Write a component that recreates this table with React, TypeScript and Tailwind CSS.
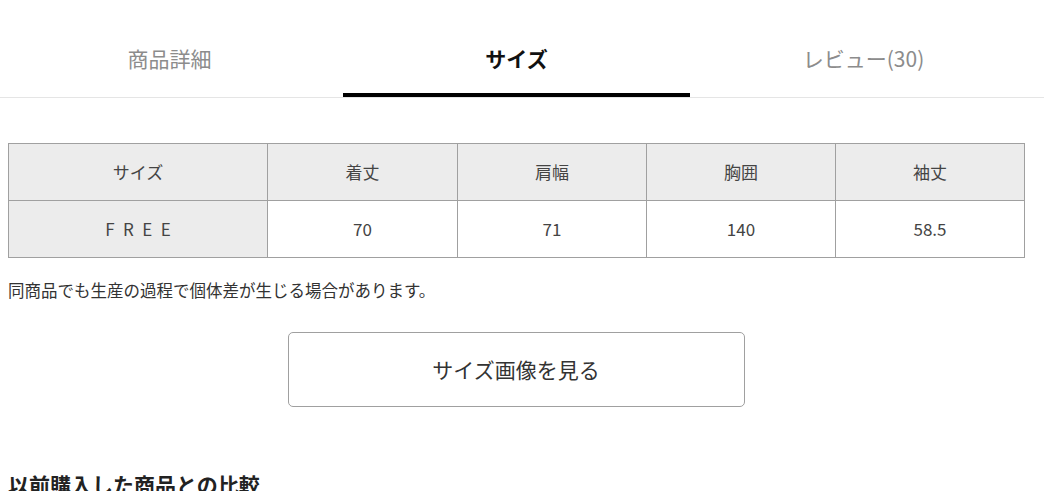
import React from "react";

const font = { fontFamily: '"Noto Sans CJK JP", "Noto Sans", sans-serif' };

export default function App() {
  const headers = ["サイズ", "着丈", "肩幅", "胸囲", "袖丈"];
  const values = ["70", "71", "140", "58.5"];
  return (
    <div className="w-[1044px] h-[491px] overflow-hidden bg-white text-[#333]" style={font}>
      <div className="border-b border-[#e5e5e5] pt-[20px]">
        <div className="ml-[-4px] w-[1041px] grid grid-cols-3 text-[21px]">
          <div className="h-[77px] flex items-start justify-center pt-[23px] text-[#8c8c8c]">商品詳細</div>
          <div className="h-[77px] flex items-start justify-center pt-[23px] font-bold text-[#111] border-b-[4px] border-black">サイズ</div>
          <div className="h-[77px] flex items-start justify-center pt-[23px] text-[#8c8c8c]">レビュー(30)</div>
        </div>
      </div>
      <div className="px-[8px] pt-[45px]">
        <table className="w-[1017px] border-collapse text-[17px] text-[#444]">
          <colgroup>
            <col className="w-[259px]" />
            <col className="w-[190px]" />
            <col className="w-[189px]" />
            <col className="w-[189px]" />
            <col className="w-[189px]" />
          </colgroup>
          <tbody>
            <tr className="h-[57px]">
              {headers.map((h) => (
                <td key={h} className="border border-[#a0a0a0] bg-[#ececec] text-center font-normal">
                  {h}
                </td>
              ))}
            </tr>
            <tr className="h-[57px]">
              <td className="border border-[#a0a0a0] bg-[#ececec] text-center tracking-[0.5em] pl-[0.5em]">FREE</td>
              {values.map((v) => (
                <td key={v} className="border border-[#a0a0a0] bg-white text-center">
                  {v}
                </td>
              ))}
            </tr>
          </tbody>
        </table>
        <p className="mt-[20px] text-[16.5px] leading-[24px] text-[#333]">同商品でも生産の過程で個体差が生じる場合があります。</p>
        <div className="flex justify-center mt-[30px]">
          <div className="w-[457px] h-[75px] border border-[#a0a0a0] rounded-[5px] flex items-center justify-center text-[21px] text-[#333] mr-[12px]">
            サイズ画像を見る
          </div>
        </div>
        <h2 className="mt-[62px] text-[21px] font-bold text-[#222] leading-[30px]">以前購入した商品との比較</h2>
      </div>
    </div>
  );
}
